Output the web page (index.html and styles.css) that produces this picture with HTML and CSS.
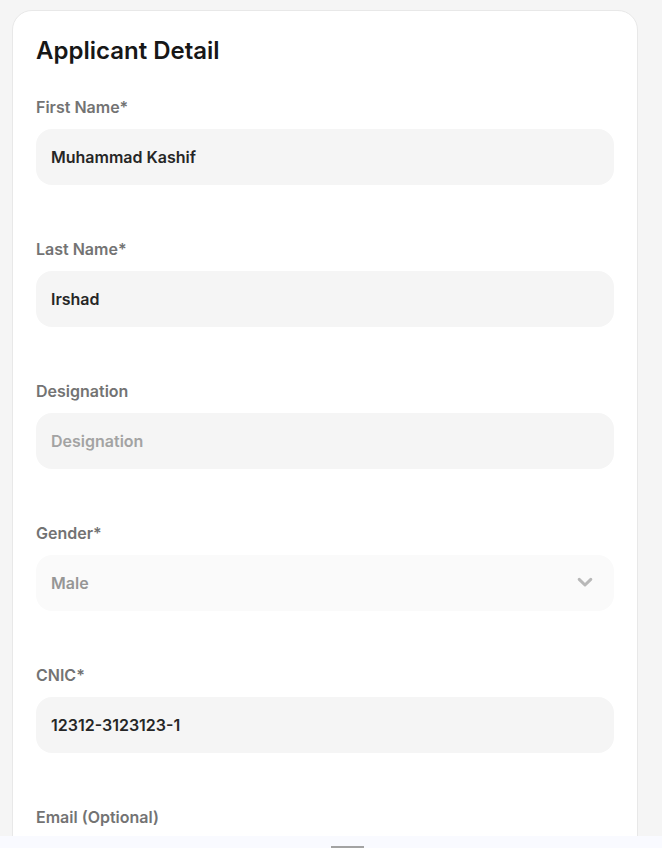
FILE: index.html
```html
<!DOCTYPE html>
<html lang="en">
<head>
  <meta charset="utf-8">
  <meta name="viewport" content="width=device-width, initial-scale=1">
  <title>Applicant Detail</title>
  <link rel="stylesheet" href="styles.css">
</head>
<body>
  <main class="pane">
    <form class="card">
      <h1 class="card-title">Applicant Detail</h1>
      <div class="fields">
        <div class="field">
          <label class="label" for="first-name">First Name*</label>
          <input class="control" id="first-name" type="text" value="Muhammad Kashif">
        </div>
        <div class="field">
          <label class="label" for="last-name">Last Name*</label>
          <input class="control" id="last-name" type="text" value="Irshad">
        </div>
        <div class="field">
          <label class="label" for="designation">Designation</label>
          <input class="control" id="designation" type="text" placeholder="Designation">
        </div>
        <div class="field">
          <label class="label" for="gender">Gender*</label>
          <div class="select-wrap">
            <select class="control" id="gender" disabled>
              <option>Male</option>
            </select>
            <svg class="chevron" viewBox="0 0 20 20" aria-hidden="true">
              <path d="M4.2 7.4 10 13l5.8-5.6"/>
            </svg>
          </div>
        </div>
        <div class="field">
          <label class="label" for="cnic">CNIC*</label>
          <input class="control" id="cnic" type="text" value="12312-3123123-1">
        </div>
        <div class="field">
          <label class="label" for="email">Email (Optional)</label>
          <input class="control" id="email" type="email">
        </div>
      </div>
    </form>
  </main>
  <footer class="bottom-bar"><span class="handle"></span></footer>
</body>
</html>
```
FILE: styles.css
```css
* {
  box-sizing: border-box;
}

body {
  display: flex;
  flex-direction: column;
  height: 100vh;
  margin: 0;
  overflow: hidden;
  background: #f5f5f5;
  color: #171717;
  font-family: Inter, "Liberation Sans", sans-serif;
  font-size: 16px;
  line-height: 24px;
}

.pane {
  flex: 1;
  min-height: 0;
  overflow: hidden;
  padding: 10px 24px 0 12px;
}

.card {
  padding: 24px 23px;
  border: 1px solid #e8e8e8;
  border-radius: 20px;
  background: #fff;
}

.card-title {
  margin: 0 0 28px;
  font-size: 24px;
  font-weight: 600;
  line-height: 32px;
}

.fields {
  display: flex;
  flex-direction: column;
  gap: 52px;
}

.field {
  display: flex;
  flex-direction: column;
  gap: 10px;
}

.label {
  color: #737373;
  font-weight: 600;
}

.control {
  width: 100%;
  height: 56px;
  margin: 0;
  padding: 0 15px;
  border: 0;
  border-radius: 16px;
  outline: 0;
  appearance: none;
  background: #f5f5f5;
  color: #262626;
  font: inherit;
  font-weight: 600;
}

.control::placeholder {
  color: #a3a3a3;
  opacity: 1;
}

.control:disabled {
  background: #fafafa;
  color: #969696;
  opacity: 1;
}

.select-wrap {
  position: relative;
}

.chevron {
  position: absolute;
  top: 17px;
  right: 19px;
  width: 20px;
  height: 20px;
  fill: none;
  stroke: #b8b8b8;
  stroke-width: 3;
  stroke-linecap: round;
  stroke-linejoin: round;
}

.bottom-bar {
  height: 12px;
  padding: 10px 0 0 33px;
  background: #f9faff;
}

.handle {
  display: block;
  width: 33px;
  height: 2px;
  margin: 0 auto;
  background: #a3a3a3;
}
```
